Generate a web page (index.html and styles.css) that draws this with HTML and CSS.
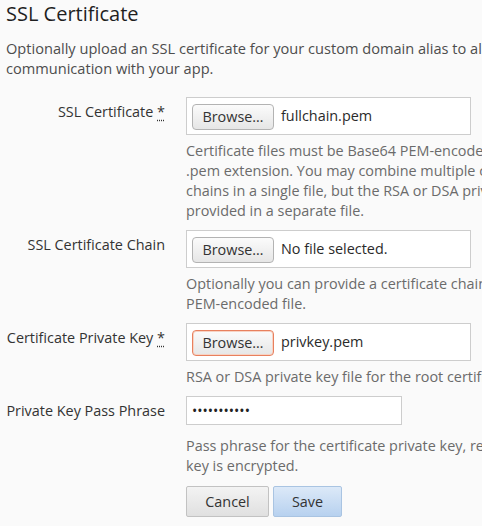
FILE: index.html
```html
<!DOCTYPE html>
<html>
<head>
<meta charset="utf-8">
<link rel="stylesheet" href="styles.css">
</head>
<body>
<div class="page">
  <h1 class="title">SSL Certificate</h1>
  <p class="intro">Optionally upload an SSL certificate for your custom domain alias to allow secure communication with your app.</p>
  <form class="form">
    <div class="group">
      <label class="label">SSL Certificate <abbr title="required">*</abbr></label>
      <div class="control">
        <div class="file-box"><span class="browse">Browse…</span><span class="fname">fullchain.pem</span></div>
        <p class="help">Certificate files must be Base64 PEM-encoded and typically have a .pem extension. You may combine multiple certificates and their chains in a single file, but the RSA or DSA private key itself must be provided in a separate file.</p>
      </div>
    </div>
    <div class="group">
      <label class="label">SSL Certificate Chain</label>
      <div class="control">
        <div class="file-box"><span class="browse">Browse…</span><span class="fname">No file selected.</span></div>
        <p class="help">Optionally you can provide a certificate chain in a separate Base64 PEM-encoded file.</p>
      </div>
    </div>
    <div class="group">
      <label class="label">Certificate Private Key <abbr title="required">*</abbr></label>
      <div class="control">
        <div class="file-box"><span class="browse focused">Browse…</span><span class="fname">privkey.pem</span></div>
        <p class="help">RSA or DSA private key file for the root certificate.</p>
      </div>
    </div>
    <div class="group">
      <label class="label">Private Key Pass Phrase</label>
      <div class="control">
        <input class="pass" type="password" value="secretvalue">
        <p class="help help-pass">Pass phrase for the certificate private key, required when the private key is encrypted.</p>
        <div class="actions">
          <button type="button" class="btn btn-cancel">Cancel</button>
          <button type="button" class="btn btn-save">Save</button>
        </div>
      </div>
    </div>
  </form>
</div>
</body>
</html>
```
FILE: styles.css
```css
html, body {
  margin: 0;
  padding: 0;
  overflow: hidden;
  background: #fafafa;
}
body {
  font-family: "Open Sans", "DejaVu Sans", sans-serif;
  font-size: 14.4px;
  line-height: 20px;
  color: #333;
}
.page {
  width: 700px;
  padding: 0 6px;
}
.title {
  margin: 2px 0 0 0;
  font-size: 20px;
  line-height: 24px;
  font-weight: 400;
  color: #1f1f1f;
}
.intro {
  margin: 12px 0 0 0;
  width: 600px;
  font-size: 14.6px;
  color: #4d4d4d;
}
.form {
  margin-top: 19px;
}
.group {
  display: grid;
  grid-template-columns: 159px 464px;
  column-gap: 21px;
  margin-bottom: 9px;
}
.label {
  text-align: right;
  padding-top: 5px;
  color: #333;
}
.label abbr {
  text-decoration: underline dotted;
  text-underline-offset: 3px;
  cursor: help;
}
.file-box {
  width: 285px;
  height: 38px;
  box-sizing: border-box;
  border: 1px solid #cdcdcd;
  background: #fff;
  display: flex;
  align-items: center;
  padding: 0 5px;
  gap: 7px;
}
.browse {
  box-sizing: border-box;
  width: 82px;
  height: 26px;
  margin-top: 1px;
  border: 1px solid #b3b3b3;
  border-radius: 4px;
  background: linear-gradient(#fbfbfb, #e6e6e6);
  display: flex;
  align-items: center;
  justify-content: center;
  color: #333;
}
.browse.focused {
  border-color: #e8805e;
  box-shadow: inset 0 0 0 1px #f7d3c4;
}
.fname {
  color: #2a2a2a;
}
.help {
  margin: 6px 0 0 0;
  color: #6b6b6b;
}
.pass {
  display: block;
  box-sizing: border-box;
  width: 216px;
  height: 29px;
  margin: 0;
  border: 1px solid #cdcdcd;
  background: #fff;
  padding: 0 5px;
  font-family: "Open Sans", sans-serif;
  font-size: 14px;
  color: #222;
  outline: none;
}
.help-pass {
  margin-top: 11px;
}
.actions {
  display: flex;
  gap: 4px;
  margin-top: 10px;
}
.btn {
  box-sizing: border-box;
  height: 31px;
  padding: 0;
  font-family: "Open Sans", sans-serif;
  font-size: 14.4px;
  color: #333;
  border-radius: 2px;
  cursor: pointer;
}
.btn-cancel {
  width: 83px;
  border: 1px solid #c2c2c2;
  background: linear-gradient(#f3f3f3, #e0e0e0);
}
.btn-save {
  width: 69px;
  border: 1px solid #a9c4e2;
  background: linear-gradient(#dce9f8, #b7d1ef);
}
```
